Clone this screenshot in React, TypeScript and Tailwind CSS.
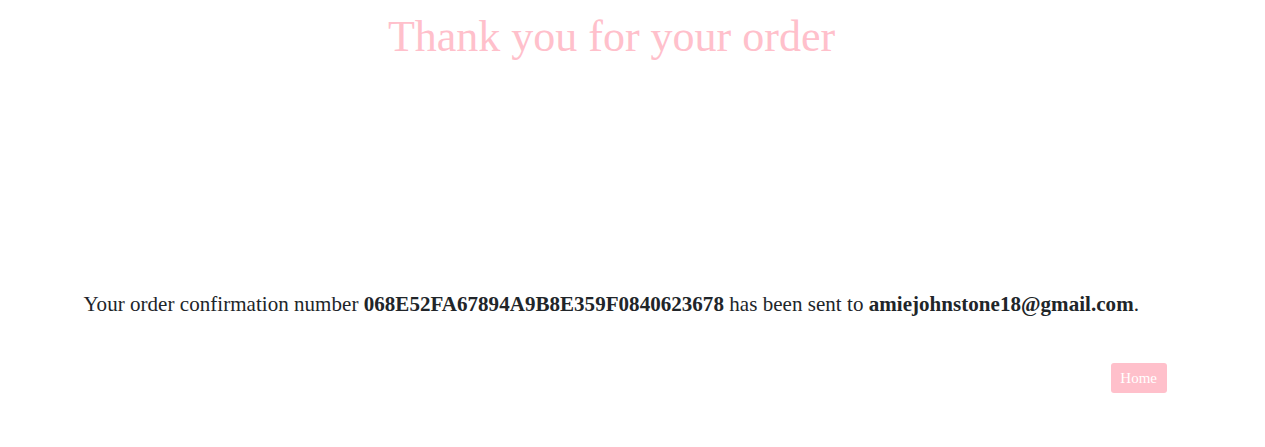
export default function App() {
    return <div className="w-full min-h-[447px] bg-white text-[#212529]" style={{ fontFamily: '"Liberation Serif", serif' }}>
        <div className="max-w-[1140px] mx-auto px-[15px]">
            <div className="pr-[42px] pt-[9px]">
                <h1 className="text-center text-[pink] text-[44px] leading-[56px] font-normal">Thank you for your order</h1>
            </div>
            <p className="mt-[224px] pl-[6px] text-[21px] leading-[30px] tracking-[0.04px]">
                Your order confirmation number <b>068E52FA67894A9B8E359F0840623678</b> has been sent to <b>amiejohnstone18@gmail.com</b>.
            </p>
            <div className="flex justify-end pr-[21px] mt-[44px]">
                <button className="bg-[pink] text-white text-[15px] leading-[22px] px-[9.5px] py-[4px] rounded-[3px]">Home</button>
            </div>
        </div>
    </div>
}
